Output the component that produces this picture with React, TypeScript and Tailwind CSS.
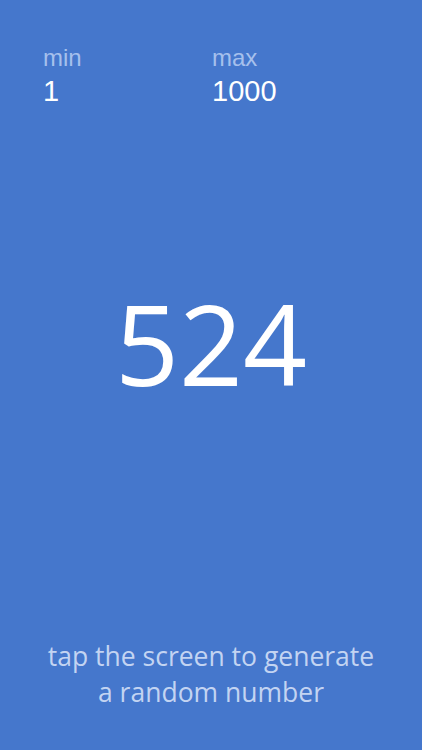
export default function App() {
  const min = 1;
  const max = 1000;
  const value = 524;

  return (
    <div className="flex h-[750px] w-full flex-col bg-[#4577cc] select-none">
      {/* range header */}
      <div className="flex px-[43px] pt-[44px]">
        <div className="w-[169px]">
          <div className="text-[24px] leading-[28px] text-[#a6c0ec] font-['Liberation_Sans',sans-serif]">min</div>
          <div className="mt-[3px] text-[29px] leading-[33px] text-white font-['Liberation_Sans',sans-serif]">{min}</div>
        </div>
        <div>
          <div className="text-[24px] leading-[28px] text-[#a6c0ec] font-['Liberation_Sans',sans-serif]">max</div>
          <div className="mt-[3px] text-[29px] leading-[33px] text-white font-['Liberation_Sans',sans-serif]">{max}</div>
        </div>
      </div>

      {/* current number */}
      <div className="flex flex-1 items-center justify-center pb-[60px]">
        <div className="text-[112px] leading-none font-normal text-white font-['Open_Sans',sans-serif]">{value}</div>
      </div>

      {/* hint */}
      <div className="pb-[40px] text-center text-[26.5px] leading-[36px] text-[#c3d4f2] font-['Open_Sans',sans-serif]">
        tap the screen to generate
        <br />
        a random number
      </div>
    </div>
  );
}
